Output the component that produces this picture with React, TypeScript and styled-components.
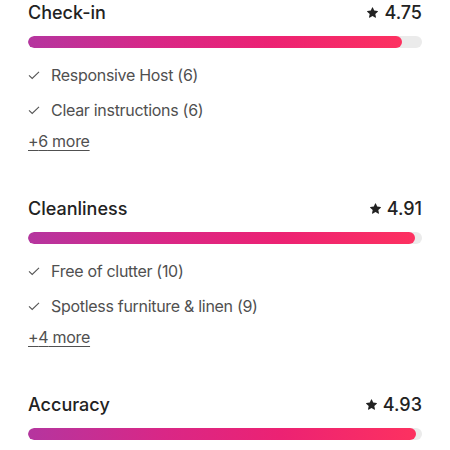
import React from "react";
import styled, { createGlobalStyle } from "styled-components";

type Category = {
  title: string;
  rating: number;
  tags: string[];
  more?: number;
};

const categories: Category[] = [
  {
    title: "Check-in",
    rating: 4.75,
    tags: ["Responsive Host (6)", "Clear instructions (6)"],
    more: 6,
  },
  {
    title: "Cleanliness",
    rating: 4.91,
    tags: ["Free of clutter (10)", "Spotless furniture & linen (9)"],
    more: 4,
  },
  { title: "Accuracy", rating: 4.93, tags: [] },
];

const GlobalStyle = createGlobalStyle`
  body {
    margin: 0;
    background: #fff;
    font-family: Inter, "Noto Sans", sans-serif;
  }
`;

const Star = () => (
  <svg width="11" height="11" viewBox="0 0 32 32" fill="#222">
    <path d="M15.1 1.58l-4.13 8.88-9.86 1.27a1 1 0 0 0-.54 1.74l7.3 6.57-1.97 9.85a1 1 0 0 0 1.48 1.06l8.62-5 8.63 5a1 1 0 0 0 1.48-1.06l-1.97-9.85 7.3-6.57a1 1 0 0 0-.55-1.73l-9.86-1.28-4.12-8.88a1 1 0 0 0-1.82 0z" />
  </svg>
);

const Check = () => (
  <svg width="12" height="12" viewBox="0 0 12 12" fill="none" stroke="#555" strokeWidth="1.1">
    <path d="M1 6.4l3.2 3.1L11 2.8" />
  </svg>
);

export default function App() {
  return (
    <>
      <GlobalStyle />
      <Page>
        {categories.map((c) => (
          <Section key={c.title}>
            <Header>
              <Title>{c.title}</Title>
              <Rating>
                <Star />
                {c.rating.toFixed(2)}
              </Rating>
            </Header>
            <Track>
              <Fill style={{ width: `${(c.rating / 5) * 100}%` }} />
            </Track>
            {c.tags.length > 0 && (
              <Tags>
                {c.tags.map((t) => (
                  <Tag key={t}>
                    <Check />
                    {t}
                  </Tag>
                ))}
              </Tags>
            )}
            {!!c.more && <More href="#">+{c.more} more</More>}
          </Section>
        ))}
      </Page>
    </>
  );
}

const Page = styled.div`
  padding: 0 28px;
  display: flex;
  flex-direction: column;
  gap: 43px;
`;

const Section = styled.section`
  display: flex;
  flex-direction: column;
`;

const Header = styled.div`
  display: flex;
  justify-content: space-between;
  align-items: center;
  height: 24px;
`;

const Title = styled.h3`
  margin: 0;
  font-size: 18px;
  font-weight: 500;
  color: #222;
`;

const Rating = styled.div`
  display: flex;
  align-items: center;
  gap: 6px;
  font-size: 18px;
  font-weight: 500;
  color: #222;
`;

const Track = styled.div`
  margin-top: 12px;
  height: 12px;
  border-radius: 6px;
  background: #ebebeb;
  overflow: hidden;
`;

const Fill = styled.div`
  height: 100%;
  border-radius: 6px;
  background: linear-gradient(90deg, #b5359f 0%, #d92786 35%, #ec2273 65%, #fd3160 100%);
`;

const Tags = styled.div`
  margin-top: 15px;
  display: flex;
  flex-direction: column;
  gap: 11px;
`;

const Tag = styled.div`
  display: flex;
  align-items: center;
  gap: 11px;
  height: 24px;
  font-size: 16px;
  letter-spacing: -0.3px;
  color: #505050;
`;

const More = styled.a`
  margin-top: 7px;
  line-height: 24px;
  font-size: 16px;
  letter-spacing: -0.3px;
  color: #505050;
  text-decoration: underline;
  text-underline-offset: 3px;
  align-self: flex-start;
`;
